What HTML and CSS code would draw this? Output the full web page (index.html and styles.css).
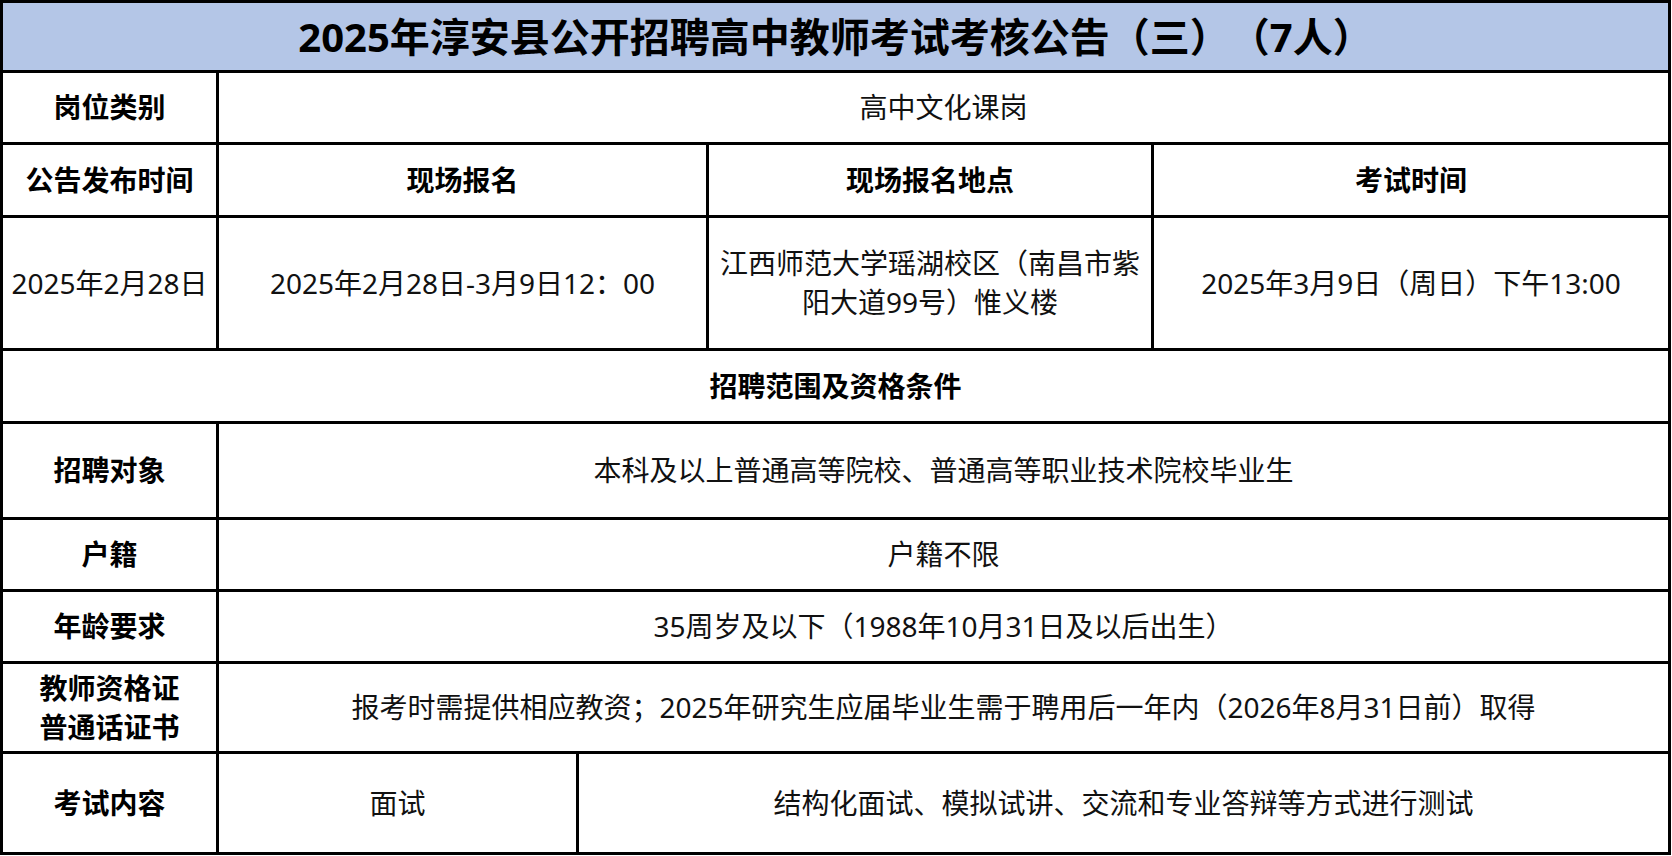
FILE: index.html
```html
<!DOCTYPE html>
<html lang="zh-CN">
<head>
<meta charset="utf-8">
<title>2025年淳安县公开招聘高中教师考试考核公告（三）（7人）</title>
<link rel="stylesheet" href="styles.css">
</head>
<body>
<div class="sheet">
  <div class="cell title span-all">2025年淳安县公开招聘高中教师考试考核公告（三）（7人）</div>

  <div class="cell label">岗位类别</div>
  <div class="cell span-rest">高中文化课岗</div>

  <div class="cell label">公告发布时间</div>
  <div class="cell label span-2">现场报名</div>
  <div class="cell label">现场报名地点</div>
  <div class="cell label">考试时间</div>

  <div class="cell">2025年2月28日</div>
  <div class="cell span-2">2025年2月28日-3月9日12：00</div>
  <div class="cell">江西师范大学瑶湖校区（南昌市紫<br>阳大道99号）惟义楼</div>
  <div class="cell">2025年3月9日（周日）下午13:00</div>

  <div class="cell label span-all">招聘范围及资格条件</div>

  <div class="cell label">招聘对象</div>
  <div class="cell span-rest">本科及以上普通高等院校、普通高等职业技术院校毕业生</div>

  <div class="cell label">户籍</div>
  <div class="cell span-rest">户籍不限</div>

  <div class="cell label">年龄要求</div>
  <div class="cell span-rest">35周岁及以下（1988年10月31日及以后出生）</div>

  <div class="cell label">教师资格证<br>普通话证书</div>
  <div class="cell span-rest">报考时需提供相应教资；2025年研究生应届毕业生需于聘用后一年内（2026年8月31日前）取得</div>

  <div class="cell label">考试内容</div>
  <div class="cell">面试</div>
  <div class="cell span-3">结构化面试、模拟试讲、交流和专业答辩等方式进行测试</div>
</div>
</body>
</html>
```

FILE: styles.css
```css
html, body {
  margin: 0;
  padding: 0;
  background: #ffffff;
}

.sheet {
  display: grid;
  width: 1671px;
  box-sizing: border-box;
  padding: 3px;
  gap: 3px;
  background: #000000;
  grid-template-columns: 213px 357px 127px 442px 514px;
  grid-template-rows: 67px 69px 70px 130px 70px 93px 69px 69px 87px 98px;
  font-family: "Noto Sans", "Noto Sans CJK SC", sans-serif;
  font-size: 28px;
  line-height: 1.38;
  color: #111111;
  text-spacing-trim: space-all;
}

.cell {
  background: #ffffff;
  display: flex;
  align-items: center;
  justify-content: center;
  text-align: center;
  white-space: nowrap;
}

.label {
  font-weight: 700;
  color: #000000;
}

.title {
  background: #b4c6e7;
  font-size: 40px;
  font-weight: 700;
  color: #000000;
}

.span-all { grid-column: 1 / -1; }
.span-rest { grid-column: 2 / -1; }
.span-2 { grid-column: span 2; }
.span-3 { grid-column: span 3; }
```
